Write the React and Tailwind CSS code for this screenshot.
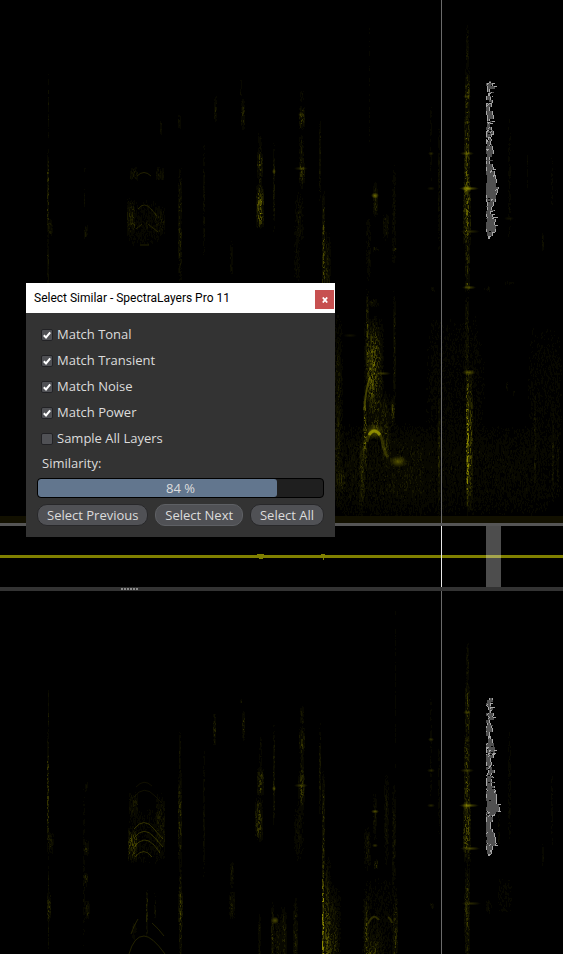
import { useState } from 'react';

// [x, y, width, height, strength]
const TOP_STREAKS = [
  [48, 70, 1, 80, 0.15], [48, 148, 2, 90, 0.45], [50, 218, 6, 18, 0.2], [48, 236, 2, 48, 0.25],
  [85, 166, 2, 6, 0.2], [84, 185, 1, 25, 0.12], [86, 224, 4, 13, 0.2],
  [161, 120, 2, 14, 0.25], [179, 112, 3, 20, 0.15], [180, 165, 4, 118, 0.3],
  [204, 135, 2, 125, 0.15], [215, 94, 3, 28, 0.2], [241, 78, 2, 20, 0.15], [243, 97, 4, 32, 0.3],
  [260, 130, 4, 25, 0.12], [260, 150, 6, 27, 0.5], [260, 184, 8, 44, 0.8], [260, 176, 3, 12, 0.3],
  [274, 138, 2, 96, 0.22], [231, 240, 3, 36, 0.15], [147, 215, 2, 20, 0.12],
  [302, 88, 4, 14, 0.12], [302, 106, 6, 24, 0.4], [301, 130, 5, 60, 0.22], [302, 159, 6, 26, 0.35], [299, 190, 10, 60, 0.14],
  [320, 115, 2, 90, 0.22], [323, 190, 3, 120, 0.5], [327, 230, 8, 90, 0.28], [297, 235, 6, 48, 0.12],
  [375, 180, 5, 38, 0.3], [368, 213, 5, 70, 0.13], [386, 212, 6, 28, 0.24], [394, 160, 4, 110, 0.14],
  [369, 1, 1, 170, 0.04], [376, 246, 6, 4, 0.3], [395, 246, 5, 4, 0.3],
  [431, 95, 2, 95, 0.1], [439, 120, 2, 140, 0.14],
  [467, 22, 3, 48, 0.2], [467, 66, 5, 60, 0.5], [467, 115, 6, 50, 0.6], [467, 145, 6, 60, 0.65],
  [467, 180, 8, 65, 0.75], [467, 234, 5, 55, 0.35], [467, 288, 4, 90, 0.25],
  [467, 365, 3, 146, 1.2], [470, 368, 5, 144, 0.5], [467, 280, 5, 10, 0.4],
  [509, 110, 3, 140, 0.08], [527, 145, 1, 48, 0.1], [543, 230, 2, 20, 0.15], [552, 150, 2, 70, 0.07],
  [367, 288, 3, 90, 0.4], [373, 298, 12, 8, 0.25], [374, 316, 20, 92, 0.55], [371, 340, 10, 70, 0.5],
  [365, 392, 4, 76, 0.65], [376, 390, 22, 50, 0.35], [386, 390, 10, 80, 0.3], [394, 285, 3, 125, 0.2],
  [393, 396, 4, 30, 0.5], [338, 310, 10, 200, 0.22], [341, 466, 12, 28, 0.28], [362, 430, 6, 80, 0.3],
  [439, 380, 2, 140, 0.3], [433, 286, 4, 5, 0.2], [535, 390, 2, 105, 0.17], [553, 410, 2, 90, 0.24], [558, 420, 2, 80, 0.14],
  [507, 380, 2, 12, 0.12], [514, 388, 2, 8, 0.12], [510, 280, 12, 3, 0.12], [488, 285, 8, 6, 0.1],
];

const TOP_FLOOR = [
  [385, 420, 110, 100, 0.12], [470, 420, 200, 100, 0.08], [455, 290, 70, 220, 0.045], [545, 300, 40, 200, 0.04],
  [145, 195, 36, 55, 0.06], [131, 198, 8, 36, 0.24], [160, 205, 10, 32, 0.14], [160, 166, 8, 14, 0.16], [134, 166, 8, 14, 0.16],
];

const BOTTOM_STREAKS = [
  [48, 94, 1, 48, 0.2], [48, 138, 2, 125, 0.45], [50, 240, 7, 22, 0.25], [48, 263, 1, 100, 0.2], [49, 300, 4, 30, 0.35],
  [84, 185, 2, 178, 0.12], [86, 190, 3, 10, 0.15], [86, 248, 5, 16, 0.28], [86, 280, 4, 14, 0.25], [87, 308, 5, 20, 0.25],
  [147, 295, 2, 52, 0.32], [155, 300, 2, 30, 0.17], [134, 330, 6, 18, 0.1],
  [180, 138, 2, 50, 0.2], [180, 180, 4, 95, 0.38], [180, 265, 3, 120, 0.3], [180, 296, 5, 40, 0.35],
  [204, 155, 2, 135, 0.15], [214, 120, 3, 35, 0.3], [241, 107, 2, 5, 0.3], [243, 120, 3, 30, 0.32],
  [260, 140, 3, 40, 0.1], [260, 176, 7, 28, 0.48], [259, 206, 8, 44, 0.5], [259, 320, 3, 60, 0.17],
  [274, 130, 2, 110, 0.25], [272, 310, 3, 80, 0.3], [232, 268, 4, 30, 0.2], [232, 298, 6, 30, 0.28],
  [302, 114, 4, 20, 0.22], [302, 134, 6, 28, 0.38], [302, 155, 4, 70, 0.28], [301, 178, 7, 36, 0.35], [299, 210, 10, 60, 0.14],
  [320, 130, 2, 95, 0.25], [323, 180, 3, 110, 0.4], [323, 255, 2, 200, 1.3], [327, 265, 8, 160, 0.4],
  [333, 290, 16, 170, 0.34], [326, 310, 9, 140, 0.5], [295, 305, 5, 90, 0.28], [284, 310, 6, 90, 0.28], [278, 320, 8, 80, 0.22],
  [367, 235, 7, 45, 0.2], [366, 300, 5, 120, 0.45], [376, 330, 18, 80, 0.18], [372, 345, 16, 60, 0.5],
  [375, 200, 4, 50, 0.17], [376, 268, 4, 9, 0.4], [386, 180, 5, 95, 0.17], [394, 190, 4, 110, 0.2], [395, 295, 5, 110, 0.35],
  [395, 1, 1, 190, 0.06], [431, 90, 2, 130, 0.08], [439, 150, 2, 100, 0.13], [432, 310, 4, 7, 0.22],
  [467, 48, 3, 48, 0.2], [467, 88, 5, 64, 0.42], [467, 142, 6, 40, 0.58], [467, 172, 6, 55, 0.6],
  [467, 208, 8, 62, 0.68], [467, 258, 5, 140, 0.3], [467, 292, 6, 55, 0.32],
  [509, 135, 3, 120, 0.1], [499, 220, 2, 40, 0.12], [552, 180, 2, 75, 0.12], [543, 250, 2, 25, 0.12],
  [489, 308, 6, 14, 0.15],
];

const BOTTOM_FLOOR = [
  [145, 210, 36, 70, 0.05], [132, 236, 9, 34, 0.38], [133, 200, 9, 26, 0.16], [160, 200, 9, 70, 0.15],
  [380, 270, 40, 170, 0.06], [505, 280, 16, 50, 0.04],
];

// [x, y, rx, ry, opacity]
const TOP_SPOTS = [
  [467, 96, 4, 1, 0.4], [467, 122, 3, 1, 0.3], [467, 153, 7, 1, 0.5], [469, 188, 10, 1, 0.7], [467, 188, 5, 3, 0.7],
  [470, 231, 10, 1, 0.3], [469, 287, 7, 1, 0.5], [469, 372, 7, 2, 0.6], [375, 195, 4, 2, 0.8], [301, 168, 7, 1, 0.3],
  [260, 202, 3, 3, 0.6], [274, 171, 2, 2, 0.5], [431, 153, 3, 1, 0.3], [431, 188, 4, 1, 0.2], [382, 373, 9, 1, 0.4],
  [398, 461, 9, 5, 0.6], [301, 114, 3, 2, 0.3], [509, 218, 5, 1, 0.15], [350, 335, 7, 1, 0.15], [374, 431, 10, 7, 0.5],
];
const BOTTOM_SPOTS = [
  [467, 121, 4, 1, 0.4], [467, 149, 3, 1, 0.3], [467, 179, 7, 1, 0.4], [469, 214, 10, 1, 0.6], [467, 214, 5, 3, 0.5],
  [470, 257, 10, 1, 0.5], [471, 312, 10, 1, 0.3], [375, 220, 4, 1, 0.6], [375, 254, 3, 1, 0.4], [301, 194, 7, 1, 0.4],
  [274, 197, 2, 2, 0.6], [275, 329, 4, 3, 0.6], [431, 148, 3, 1, 0.4], [431, 179, 4, 1, 0.3], [431, 214, 4, 1, 0.3],
];

const LEVELS = [0.05, 0.1, 0.16, 0.24, 0.34, 0.48, 0.66, 0.9];

function makeRandom(seed) {
  let s = seed;
  return () => {
    s = (s * 1664525 + 1013904223) % 4294967296;
    return s / 4294967296;
  };
}

function buildSpeckles(streaks, seed, spread) {
  const rand = makeRandom(seed);
  const paths = LEVELS.map(() => '');
  streaks.forEach(([cx, y0, w, h, strength]) => {
    const left = Math.round(cx - w / 2);
    for (let x = left; x < left + w; x++) {
      const off = Math.abs(x + 0.5 - left - w / 2);
      const edge = spread ? Math.min(1, (w / 2 - off + 1) / (w / 5)) : 1 - off / (w / 2 + 1);
      let y = y0;
      while (y < y0 + h) {
        const len = 1 + Math.floor(rand() * 2.5);
        const t = (y - y0) / h;
        const fade = Math.min(1, 0.08 + 3 * Math.min(t, 1 - t));
        const r = rand();
        const v = strength * edge * fade * (0.15 + r * r * 1.2);
        if (v > 0.025) {
          const next = LEVELS.findIndex((l) => l > v);
          const level = next === -1 ? LEVELS.length - 1 : Math.max(0, next - 1);
          paths[level] += `M${x} ${y}h1v${len}h-1z`;
        }
        y += len;
      }
    }
  });
  return paths;
}

// [last row, inset, width, roughness] of the selected region
const SELECTION_BANDS = [
  [2, 3, 4, 0.3], [7, 0, 8, 0.2], [9, 1, 6, 0.4], [14, 2, 5, 0.6], [17, 0, 8, 0.6], [22, 2, 6, 0.6], [37, 0, 7, 0.1],
  [44, 1, 6, 0.4], [54, 0, 9, 0.9], [70, 0, 8, 0.6], [76, 1, 8, 0.3], [84, 0, 7, 0.2], [92, 0, 9, 0.2], [100, 0, 12, 0.3],
  [106, 0, 13, 0.2], [114, 0, 14, 0.3], [122, 0, 10, 0.2], [134, 0, 8, 0.05], [142, 0, 9, 0.2], [150, 0, 10, 0.2],
  [155, 1, 8, 0.5], [158, 2, 3, 0.3],
];

function buildSelection(seed) {
  const rand = makeRandom(seed);
  let fill = '';
  let edge = '';
  let gaps = '';
  let y = 0;
  while (y < 158) {
    const [, inset, base, rough] = SELECTION_BANDS.find((b) => y < b[0]);
    const run = Math.min(158 - y, 1 + Math.floor(rand() * 4));
    const x = 486 + inset + (rand() > 0.75 ? 1 : 0);
    const w = Math.max(2, base - Math.floor(rand() * 4));
    fill += `M${x} ${y}h${w}v${run}h-${w}z`;
    if (rand() > 0.45) edge += `M${x} ${y}h1v${run}h-1z`;
    if (rand() > 0.25) edge += `M${x + w - 1} ${y}h1v${run}h-1z`;
    if (rand() > 0.82) edge += `M${x + w - 1} ${y}h3v1h-3z`;
    if (rand() < rough) edge += `M${x + 1 + Math.floor(rand() * (w - 2))} ${y}h${rand() > 0.5 ? 2 : 1}v1h-1v1h-1z`;
    if (rand() < rough * 0.7) gaps += `M${x + Math.floor(rand() * w)} ${y + run - 1}h2v1h-2z`;
    y += run;
  }
  return { fill, edge, gaps };
}

function Speckles({ streaks, seed, spread = false }) {
  const paths = buildSpeckles(streaks, seed, spread);
  return (
    <g fill="#989500" shapeRendering="crispEdges">
      {paths.map((d, i) => <path key={i} d={d} opacity={LEVELS[i]} />)}
    </g>
  );
}

function Selection({ y, seed }) {
  const { fill, edge, gaps } = buildSelection(seed);
  return (
    <g transform={`translate(0 ${y})`} shapeRendering="crispEdges">
      <path d={fill} fill="#505050" />
      <path d={gaps} fill="#000" />
      <path d={edge} fill="#a6a6a6" />
    </g>
  );
}

function Spectrogram({ id, height, streaks, floor, spots, selectionY, seed, label, children }) {
  return (
    <svg viewBox={`0 0 563 ${height}`} className="block w-full" role="img" aria-label={label}>
      <defs>
        <radialGradient id={id}>
          <stop offset="0" stopColor="#a09c00" stopOpacity="0.8" />
          <stop offset="1" stopColor="#a09c00" stopOpacity="0" />
        </radialGradient>
      </defs>
      <Speckles streaks={floor} seed={seed + 1} spread />
      <Speckles streaks={streaks} seed={seed} />
      {spots.map(([x, y, rx, ry, opacity]) => (
        <ellipse key={`${x}-${y}-${rx}`} cx={x} cy={y + 0.5} rx={rx} ry={ry + 1} fill={`url(#${id})`} opacity={opacity} />
      ))}
      {children}
      <Selection y={selectionY} seed={seed + 2} />
      <rect x="441" y="0" width="1" height={height} fill="#6a6a6a" />
    </svg>
  );
}

function Overview() {
  return (
    <svg viewBox="0 0 563 61" className="block w-full" role="img" aria-label="Waveform overview" shapeRendering="crispEdges">
      <path d="M0 29h563v3H0z" fill="#808000" />
      <path d="M257 28h7v1h-1v4h-4v-3h-2zM321 28h4v2h-1v4h-1v-2h-2z" fill="#808000" />
      <rect x="441" width="1" height="61" fill="#e8e8e8" />
      <rect x="486" width="15" height="61" fill="#4d4d4d" />
      <rect x="486" y="29" width="15" height="3" fill="#a6a64d" />
    </svg>
  );
}

function Option({ label, defaultChecked }) {
  return (
    <label className="flex h-[26px] items-center gap-1 text-[13px] text-[#dcdcdc]">
      <span className="grid size-3 place-items-center">
        <input
          type="checkbox"
          defaultChecked={defaultChecked}
          className="peer col-start-1 row-start-1 size-3 appearance-none rounded-[2px] border border-[#222225] bg-[#505155]"
        />
        <svg viewBox="0 0 12 12" className="pointer-events-none col-start-1 row-start-1 hidden size-3 peer-checked:block" fill="none" stroke="#fff" strokeWidth="2">
          <path d="M2.800 6.200 5 8.400 9.200 3.400" />
        </svg>
      </span>
      {label}
    </label>
  );
}

function PillButton({ children, active }) {
  return (
    <button
      type="button"
      className={`h-[22px] rounded-[10px] border bg-[#505155] px-[9px] text-[13px] leading-5 whitespace-nowrap text-[#dcdcdc] ${active ? 'border-[#5e6064]' : 'border-[#28282a]'}`}
    >
      {children}
    </button>
  );
}

function SimilarDialog() {
  const [similarity, setSimilarity] = useState(84);

  return (
    <div role="dialog" aria-labelledby="dialog-title" className="absolute top-[283px] left-[26px] w-[309px] bg-[#333333] font-['Open_Sans','Noto_Sans',sans-serif]">
      <div className="flex h-[30px] items-center justify-between bg-white pr-px pl-2">
        <h1 id="dialog-title" className="font-[Roboto,'Open_Sans',sans-serif] text-[12px] text-black">
          Select Similar - SpectraLayers Pro 11
        </h1>
        <button type="button" aria-label="Close" className="mt-[3px] flex size-[19px] items-center justify-center bg-[#c75050]">
          <svg viewBox="0 0 6 6" className="size-[6px]" stroke="#fff" strokeWidth="1.8">
            <path d="M.8.5l4.400 5M5.200.5.8 5.500" />
          </svg>
        </button>
      </div>

      <div className="px-[11px] pt-[9px] pb-[11px]">
        <div className="pl-1">
          <Option label="Match Tonal" defaultChecked />
          <Option label="Match Transient" defaultChecked />
          <Option label="Match Noise" defaultChecked />
          <Option label="Match Power" defaultChecked />
          <Option label="Sample All Layers" />
        </div>
        <label htmlFor="similarity" className="block pt-px pb-[2px] pl-[5px] text-[13px] leading-5 text-[#dcdcdc]">
          Similarity:
        </label>
        <div className="relative mt-[3px] h-5 overflow-hidden rounded-[4px] border border-black bg-[#1f1f1f]">
          <div className="h-full rounded-[3px] bg-[#62768e]" style={{ width: `${similarity}%` }} />
          <span className="absolute inset-0 text-center text-[13px] leading-[18px] text-[#dcdcdc]">{similarity} %</span>
          <input
            id="similarity"
            type="range"
            min="0"
            max="100"
            value={similarity}
            onChange={(e) => setSimilarity(Number(e.target.value))}
            className="absolute inset-0 w-full opacity-0"
          />
        </div>
        <div className="mt-[6px] flex justify-between">
          <PillButton>Select Previous</PillButton>
          <PillButton active>Select Next</PillButton>
          <PillButton>Select All</PillButton>
        </div>
      </div>
    </div>
  );
}

export default function App() {
  return (
    <main className="relative min-h-screen overflow-hidden bg-black">
      <Spectrogram
        id="glow-top"
        height={523}
        streaks={TOP_STREAKS}
        floor={TOP_FLOOR}
        spots={TOP_SPOTS}
        selectionY={81}
        seed={11}
        label="Spectrogram, left channel"
      >
        <g fill="none" stroke="#8a8700">
          <path d="M364.500 410Q365 392 370 377" strokeWidth="2" opacity="0.45" />
          <path d="M367 442Q370 429 374 430Q379 430 382 440Q384 452 388 457" strokeWidth="3" opacity="0.3" />
          <path d="M369 435Q374 427 380 435" stroke="#aaa600" strokeWidth="3" opacity="0.7" />
          <path d="M137 176Q144 169 151 176M138 209Q144 201 151 209L157 216M136 229l6-5M148 224l10 8M140 245h9" opacity="0.25" />
        </g>
        <rect y="516" width="563" height="7" fill="#121000" />
      </Spectrogram>

      <div className="h-[3px] bg-[#555555]" />
      <Overview />
      <div className="flex h-1 items-center gap-px bg-[#333333] pl-[121px]">
        {[0, 1, 2, 3, 4, 5].map((i) => <span key={i} className="size-[2px] bg-[#8c8c8c]" />)}
      </div>

      <Spectrogram
        id="glow-bottom"
        height={363}
        streaks={BOTTOM_STREAKS}
        floor={BOTTOM_FLOOR}
        spots={BOTTOM_SPOTS}
        selectionY={107}
        seed={57}
        label="Spectrogram, right channel"
      >
        <g fill="none" stroke="#8a8700">
          <path d="M134 238Q144 225 154 238L163 248M134 247Q144 234 154 246L163 256M134 256Q144 243 154 254L160 262M135 266Q144 255 152 266" opacity="0.35" />
          <path d="M134 206Q144 193 155 205L162 212M136 196Q144 187 152 195" opacity="0.12" />
          <path d="M129 363Q134 345 144 345Q152 345 165 363M131 343Q134 334 138 328M152 332Q158 337 164 345" opacity="0.25" />
          <path d="M368 333Q373 321 379 329M388 326q3 2 4 6" strokeWidth="2" opacity="0.3" />
        </g>
      </Spectrogram>

      <SimilarDialog />
    </main>
  );
}
